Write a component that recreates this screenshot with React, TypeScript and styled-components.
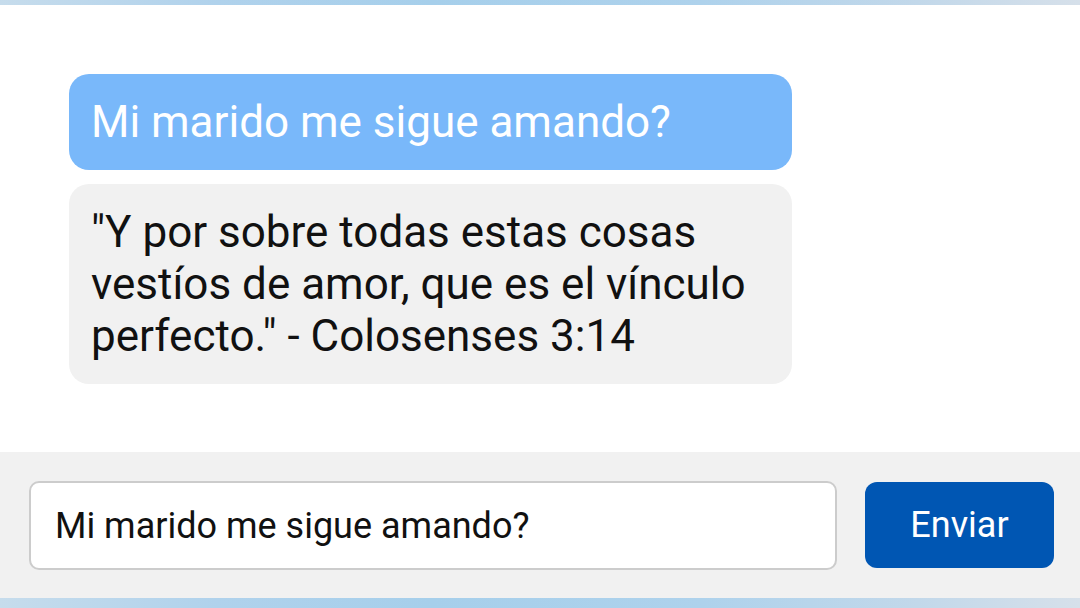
import React from "react";
import styled, { createGlobalStyle } from "styled-components";

const GlobalStyle = createGlobalStyle`
  html, body {
    margin: 0;
    padding: 0;
    background: #ffffff;
  }
  body {
    font-family: Roboto, "Liberation Sans", Arial, sans-serif;
  }
`;

const Page = styled.div`
  width: 1080px;
  height: 608px;
  display: flex;
  flex-direction: column;
  overflow: hidden;
`;

const GlowBar = styled.div<{ $h: number }>`
  height: ${(p) => p.$h}px;
  flex: none;
  background: linear-gradient(
    90deg,
    #c6dcec 0%,
    #b0d2ec 20%,
    #a6cfeb 40%,
    #aed2ec 65%,
    #c2d8ea 85%,
    #d6e0ea 100%
  );
`;

const ChatArea = styled.div`
  flex: 1;
  background: #ffffff;
  padding: 69px 0 0 69px;
  display: flex;
  flex-direction: column;
  gap: 14px;
`;

const Bubble = styled.div<{ $mine?: boolean }>`
  width: 723px;
  box-sizing: border-box;
  padding: 22px 22px;
  border-radius: 20px;
  font-size: 44px;
  line-height: 52px;
  background: ${(p) => (p.$mine ? "#79b8fa" : "#f1f1f1")};
  color: ${(p) => (p.$mine ? "#ffffff" : "#111111")};
`;

const Composer = styled.div`
  flex: none;
  height: 146px;
  box-sizing: border-box;
  background: #f1f1f1;
  padding: 29px 26px 0 29px;
  display: flex;
  align-items: flex-start;
  gap: 28px;
`;

const Field = styled.input`
  flex: 1;
  height: 89px;
  box-sizing: border-box;
  border: 2px solid #cccccc;
  border-radius: 10px;
  background: #ffffff;
  padding: 0 24px;
  font-family: Roboto, "Liberation Sans", Arial, sans-serif;
  font-size: 36px;
  color: #111111;
  outline: none;
`;

const SendButton = styled.button`
  width: 189px;
  height: 86px;
  margin-top: 1px;
  border: none;
  border-radius: 12px;
  background: #0056b3;
  color: #ffffff;
  font-family: Roboto, "Liberation Sans", Arial, sans-serif;
  font-size: 36px;
  cursor: pointer;
`;

export default function App() {
  return (
    <Page>
      <GlobalStyle />
      <GlowBar $h={5} />
      <ChatArea>
        <Bubble $mine>Mi marido me sigue amando?</Bubble>
        <Bubble>
          "Y por sobre todas estas cosas vestíos de amor, que es el vínculo
          perfecto." - Colosenses 3:14
        </Bubble>
      </ChatArea>
      <Composer>
        <Field defaultValue="Mi marido me sigue amando?" />
        <SendButton>Enviar</SendButton>
      </Composer>
      <GlowBar $h={10} />
    </Page>
  );
}
